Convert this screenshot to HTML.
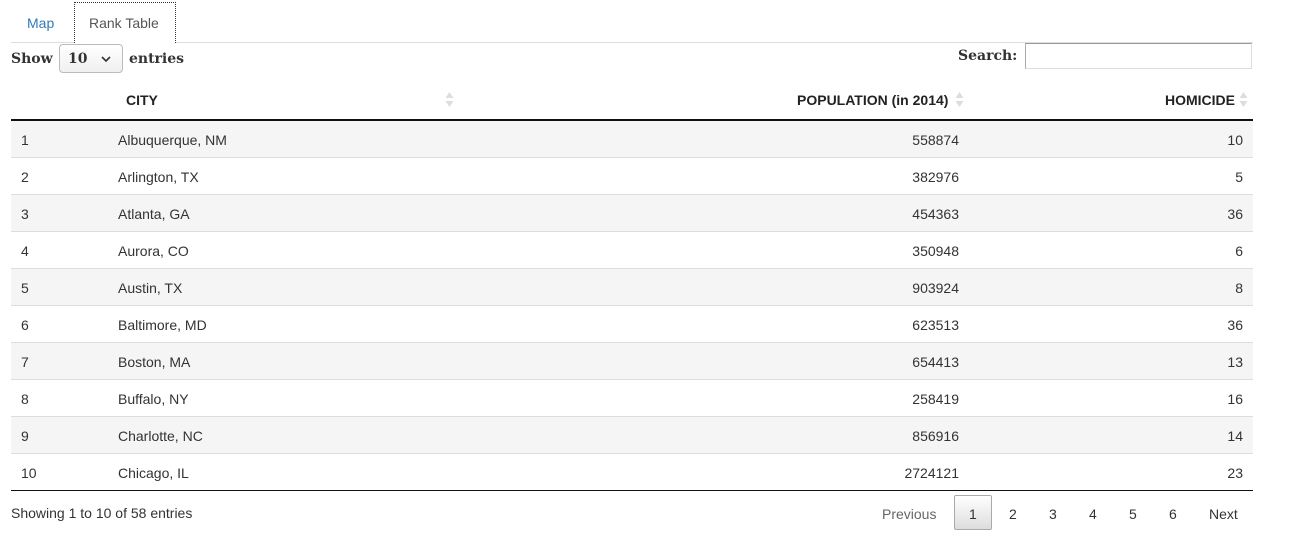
<!DOCTYPE html>
<html><head><meta charset="utf-8"><style>
*{margin:0;padding:0;box-sizing:border-box}
body{width:1316px;height:558px;background:#fff;font-family:"Liberation Sans",sans-serif;font-size:14px;color:#333;position:relative;overflow:hidden}
.a{position:absolute;white-space:nowrap}
.serif{font-family:"DejaVu Serif",serif;font-weight:bold;font-size:14px;color:#333}
.row{position:absolute;left:11px;width:1242px;height:37px;border-bottom:1px solid #ddd}
.row span{position:absolute;top:11px;line-height:16px}
.odd{background:#f5f5f5}
.th{font-weight:bold;font-size:14px;color:#222}
</style></head><body>
<div class="a" style="left:27px;top:15px;color:#337ab7">Map</div>
<div class="a" style="left:74px;top:2px;width:102px;height:41px;border:1px dotted #333;border-bottom:none;background:#fff;z-index:2"></div>
<div class="a" style="left:89px;top:15px;color:#555;z-index:3">Rank Table</div>
<div class="a" style="left:11px;top:42px;width:1242px;height:1px;background:#ddd"></div>

<div class="a serif" style="left:11px;top:51px">Show</div>
<div class="a" style="left:59px;top:44px;width:64px;height:29px;border:1px solid #bbb;border-radius:4px;background:linear-gradient(#fff,#f0f0f0)"></div>
<div class="a serif" style="left:68px;top:51px">10</div>
<svg class="a" style="left:101px;top:55px" width="10" height="8"><path d="M1 2 L5 6 L9 2" stroke="#333" stroke-width="1.6" fill="none"/></svg>
<div class="a serif" style="left:129px;top:51px">entries</div>
<div class="a serif" style="left:958px;top:48px">Search:</div>
<div class="a" style="left:1025px;top:43px;width:227px;height:26px;border:1px solid #aaa;border-top-color:#999;border-right-color:#ddd;border-bottom-color:#ddd"></div>

<div class="a th" style="left:126px;top:92px">CITY</div>
<div class="a th" style="left:797px;top:92px">POPULATION (in 2014)</div>
<div class="a th" style="left:1165px;top:92px">HOMICIDE</div>
<svg class="a" style="left:445px;top:92px" width="9" height="15"><path d="M4.5 0 L8.5 6 L0.5 6Z" fill="#ddd"/><path d="M0.5 9 L8.5 9 L4.5 15Z" fill="#ddd"/></svg>
<svg class="a" style="left:955px;top:92px" width="9" height="15"><path d="M4.5 0 L8.5 6 L0.5 6Z" fill="#ddd"/><path d="M0.5 9 L8.5 9 L4.5 15Z" fill="#ddd"/></svg>
<svg class="a" style="left:1239px;top:92px" width="9" height="15"><path d="M4.5 0 L8.5 6 L0.5 6Z" fill="#ddd"/><path d="M0.5 9 L8.5 9 L4.5 15Z" fill="#ddd"/></svg>
<div class="a" style="left:11px;top:119px;width:1242px;height:2px;background:#111"></div>

<div class="row odd" style="top:121px"><span style="left:10px">1</span><span style="left:107px">Albuquerque, NM</span><span style="right:294px">558874</span><span style="right:10px">10</span></div>
<div class="row" style="top:158px"><span style="left:10px">2</span><span style="left:107px">Arlington, TX</span><span style="right:294px">382976</span><span style="right:10px">5</span></div>
<div class="row odd" style="top:195px"><span style="left:10px">3</span><span style="left:107px">Atlanta, GA</span><span style="right:294px">454363</span><span style="right:10px">36</span></div>
<div class="row" style="top:232px"><span style="left:10px">4</span><span style="left:107px">Aurora, CO</span><span style="right:294px">350948</span><span style="right:10px">6</span></div>
<div class="row odd" style="top:269px"><span style="left:10px">5</span><span style="left:107px">Austin, TX</span><span style="right:294px">903924</span><span style="right:10px">8</span></div>
<div class="row" style="top:306px"><span style="left:10px">6</span><span style="left:107px">Baltimore, MD</span><span style="right:294px">623513</span><span style="right:10px">36</span></div>
<div class="row odd" style="top:343px"><span style="left:10px">7</span><span style="left:107px">Boston, MA</span><span style="right:294px">654413</span><span style="right:10px">13</span></div>
<div class="row" style="top:380px"><span style="left:10px">8</span><span style="left:107px">Buffalo, NY</span><span style="right:294px">258419</span><span style="right:10px">16</span></div>
<div class="row odd" style="top:417px"><span style="left:10px">9</span><span style="left:107px">Charlotte, NC</span><span style="right:294px">856916</span><span style="right:10px">14</span></div>
<div class="row" style="top:454px;border-bottom:none"><span style="left:10px">10</span><span style="left:107px">Chicago, IL</span><span style="right:294px">2724121</span><span style="right:10px">23</span></div>
<div class="a" style="left:11px;top:490px;width:1242px;height:1px;background:#111"></div>

<div class="a" style="left:11px;top:505px">Showing 1 to 10 of 58 entries</div>
<div class="a" style="left:882px;top:506px;color:#666">Previous</div>
<div class="a" style="left:954px;top:495px;width:38px;height:35px;border:1px solid #aaa;border-radius:2px;background:linear-gradient(#fff,#ddd)"></div>
<div class="a" style="left:969px;top:506px">1</div>
<div class="a" style="left:1009px;top:506px">2</div>
<div class="a" style="left:1049px;top:506px">3</div>
<div class="a" style="left:1089px;top:506px">4</div>
<div class="a" style="left:1129px;top:506px">5</div>
<div class="a" style="left:1169px;top:506px">6</div>
<div class="a" style="left:1209px;top:506px">Next</div>
</body></html>
